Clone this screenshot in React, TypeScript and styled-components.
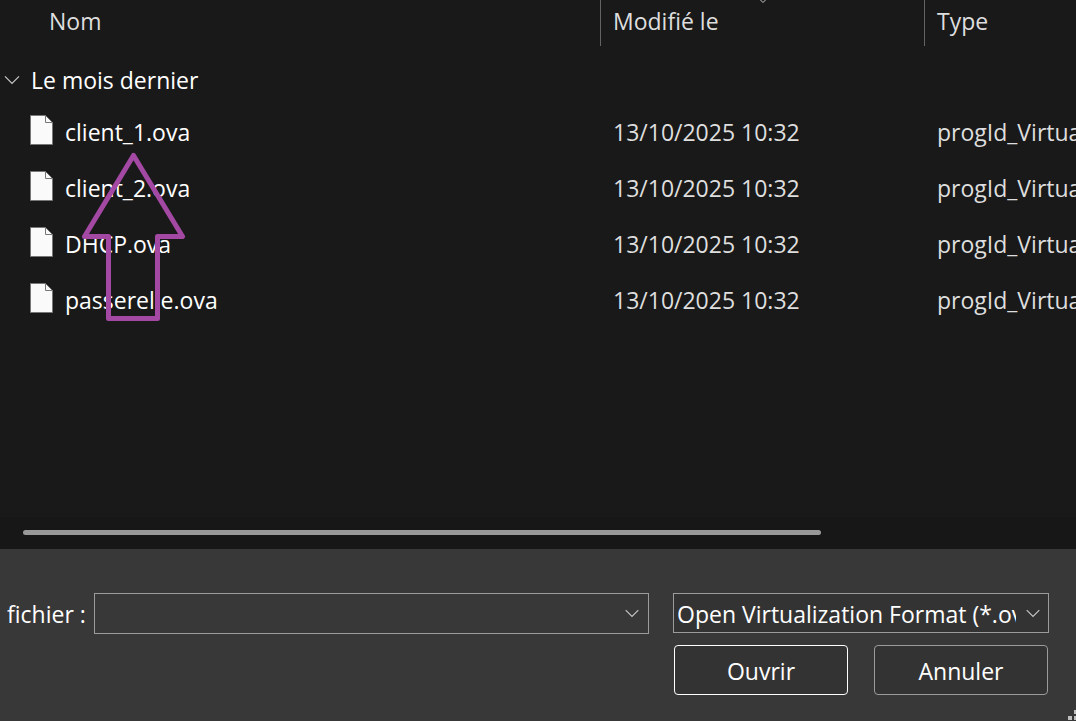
import React, { useState } from "react";
import styled, { createGlobalStyle } from "styled-components";

const GlobalStyle = createGlobalStyle`
  *, *::before, *::after { box-sizing: border-box; }
  body {
    margin: 0;
    background: #191919;
    color: #ffffff;
    font: 23px/32px "Open Sans", "Noto Sans", sans-serif;
  }
  button, input, select { font: inherit; color: inherit; margin: 0; }
`;

const Dialog = styled.main`
  display: flex;
  flex-direction: column;
  min-height: 100vh;
  overflow: hidden;
`;

const FilePane = styled.section`
  position: relative;
  flex: 1;
`;

const FileTable = styled.table`
  width: 100%;
  table-layout: fixed;
  border-collapse: separate;
  border-spacing: 0;
`;

const Column = styled.col<{ $width?: number }>`
  width: ${({ $width }) => ($width ? `${$width}px` : "auto")};
`;

const HeaderCell = styled.th<{ $first?: boolean }>`
  position: relative;
  height: 46px;
  padding: ${({ $first }) => ($first ? "0 0 4px 49px" : "0 0 4px 12px")};
  border-left: ${({ $first }) => ($first ? "none" : "1px solid #636363")};
  color: #dedede;
  font-weight: 400;
  text-align: left;
  white-space: nowrap;
`;

const SortMark = styled.svg`
  position: absolute;
  top: 0;
  left: 50%;
  margin-left: -5px;
`;

const GroupCell = styled.th`
  height: 59px;
  padding: 8px 0 0;
  font-weight: 400;
  text-align: left;
`;

const GroupToggle = styled.button`
  display: flex;
  align-items: center;
  gap: 11px;
  padding: 0 4px;
  border: 0;
  background: none;
`;

const Cell = styled.td`
  height: 56px;
  padding: 0 0 2px 13px;
  color: #dedede;
  white-space: nowrap;
  overflow: hidden;
`;

const FileName = styled.div`
  display: flex;
  align-items: center;
  gap: 12px;
  padding-left: 17px;
  color: #ffffff;
`;

const FileGlyph = styled.svg`
  margin-bottom: 5px;
`;

const Arrow = styled.svg`
  position: absolute;
  top: 150px;
  left: 80px;
  pointer-events: none;
`;

const ScrollTrack = styled.div`
  display: flex;
  align-items: center;
  height: 32px;
  padding: 0 255px 2px 23px;
  background: #171717;
`;

const ScrollThumb = styled.div`
  flex: 1;
  height: 5px;
  border-radius: 3px;
  background: #999999;
`;

const Footer = styled.form`
  position: relative;
  display: flex;
  align-items: flex-start;
  padding: 44px 27px 26px 7px;
  background: #383838;
`;

const FieldLabel = styled.label`
  width: 87px;
  padding-top: 5px;
  white-space: nowrap;
`;

const ComboBox = styled.div`
  display: flex;
  flex: 1;
  min-width: 0;
  height: 41px;
  margin-right: 24px;
  border: 1px solid #9b9b9b;
`;

const ComboInput = styled.input`
  flex: 1;
  min-width: 0;
  padding: 0 4px;
  border: 0;
  outline: 0;
  background: transparent;
`;

const ComboButton = styled.button`
  display: flex;
  align-items: center;
  justify-content: center;
  width: 32px;
  padding: 0;
  border: 0;
  background: none;
`;

const Actions = styled.div`
  display: flex;
  flex-direction: column;
  gap: 12px;
  width: 376px;
`;

const SelectBox = styled.div`
  position: relative;
  display: flex;
  height: 40px;
  border: 1px solid #9b9b9b;
  background: #333333;
`;

const FormatSelect = styled.select`
  appearance: none;
  width: 100%;
  padding: 2px 32px 0 3px;
  border: 0;
  outline: 0;
  background: transparent;
  text-overflow: clip;
`;

const SelectMark = styled.span`
  position: absolute;
  inset: 0 8px 0 auto;
  display: flex;
  align-items: center;
  pointer-events: none;
`;

const ButtonRow = styled.div`
  display: flex;
  gap: 26px;
  padding: 0 1px;
`;

const ActionButton = styled.button<{ $primary?: boolean }>`
  flex: 1;
  height: 50px;
  padding: 2px 0 0;
  border: 1px solid ${({ $primary }) => ($primary ? "#ffffff" : "#9b9b9b")};
  border-radius: 4px;
  background: #333333;
`;

const SizeGrip = styled.svg`
  position: absolute;
  right: 0;
  bottom: 0;
`;

const Chevron = ({ size = 14 }: { size?: number }) => (
  <svg width={size} height={size / 2 + 2} viewBox="0 0 14 9" fill="none" stroke="#c8c8c8" strokeWidth="1.1" aria-hidden="true">
    <path d="M.7 1.2 7 7.5l6.3-6.3" />
  </svg>
);

const FileIcon = () => (
  <FileGlyph width="23" height="30" viewBox="0 0 23 30" aria-hidden="true">
    <path d="M.5.5h15l7 7v22H.5z" fill="#fafafa" stroke="#777777" />
    <path d="M15.5.5v7h7" fill="none" stroke="#777777" />
  </FileGlyph>
);

const files = ["client_1.ova", "client_2.ova", "DHCP.ova", "passerelle.ova"].map((name) => ({
  name,
  modified: "13/10/2025 10:32",
  type: "progId_Virtua",
}));

export default function App() {
  const [open, setOpen] = useState(true);
  const [fileName, setFileName] = useState("");

  return (
    <>
      <GlobalStyle />
      <Dialog>
        <FilePane>
          <FileTable>
            <colgroup>
              <Column />
              <Column $width={324} />
              <Column $width={152} />
            </colgroup>
            <thead>
              <tr>
                <HeaderCell $first scope="col">Nom</HeaderCell>
                <HeaderCell scope="col">
                  Modifié le
                  <SortMark width="10" height="4" viewBox="0 0 10 4" fill="none" stroke="#c8c8c8" aria-hidden="true">
                    <path d="M1.5-1 5 2.5 8.5-1" />
                  </SortMark>
                </HeaderCell>
                <HeaderCell scope="col">Type</HeaderCell>
              </tr>
            </thead>
            <tbody>
              <tr>
                <GroupCell colSpan={3} scope="rowgroup">
                  <GroupToggle type="button" aria-expanded={open} onClick={() => setOpen(!open)}>
                    <Chevron size={16} />
                    Le mois dernier
                  </GroupToggle>
                </GroupCell>
              </tr>
              {open &&
                files.map((file) => (
                  <tr key={file.name}>
                    <Cell>
                      <FileName>
                        <FileIcon />
                        {file.name}
                      </FileName>
                    </Cell>
                    <Cell>{file.modified}</Cell>
                    <Cell>{file.type}</Cell>
                  </tr>
                ))}
            </tbody>
          </FileTable>
          <Arrow width="108" height="174" viewBox="80 150 108 174" fill="none" stroke="#a349a4" strokeWidth="5" strokeLinejoin="round" aria-hidden="true">
            <path d="M133.5 155.5 182.5 236.5H157.5V318.5H108.5V236.5H84.5Z" />
          </Arrow>
        </FilePane>
        <ScrollTrack>
          <ScrollThumb />
        </ScrollTrack>
        <Footer onSubmit={(event) => event.preventDefault()}>
          <FieldLabel htmlFor="file-name">fichier :</FieldLabel>
          <ComboBox>
            <ComboInput id="file-name" type="text" value={fileName} onChange={(event) => setFileName(event.target.value)} />
            <ComboButton type="button" aria-label="Historique">
              <Chevron />
            </ComboButton>
          </ComboBox>
          <Actions>
            <SelectBox>
              <FormatSelect aria-label="Type de fichier">
                <option>Open Virtualization Format (*.ova)</option>
              </FormatSelect>
              <SelectMark>
                <Chevron />
              </SelectMark>
            </SelectBox>
            <ButtonRow>
              <ActionButton $primary type="submit">Ouvrir</ActionButton>
              <ActionButton type="button">Annuler</ActionButton>
            </ButtonRow>
          </Actions>
          <SizeGrip width="8" height="11" viewBox="0 0 8 11" fill="#bfbfbf" aria-hidden="true">
            <path d="M6 0h4v4H6zM0 6h4v4H0zM6 6h4v4H6z" />
          </SizeGrip>
        </Footer>
      </Dialog>
    </>
  );
}
